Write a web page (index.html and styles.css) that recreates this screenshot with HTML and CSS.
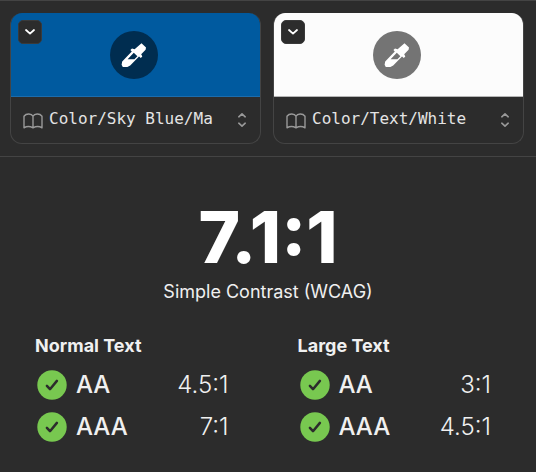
FILE: index.html
```html
<!DOCTYPE html>
<html lang="en">
<head>
<meta charset="utf-8">
<meta name="viewport" content="width=device-width, initial-scale=1">
<title>Contrast</title>
<link rel="stylesheet" href="styles.css">
</head>
<body>
<svg class="sprite" aria-hidden="true">
  <symbol id="dropper" viewBox="0 0 26 26">
    <path fill="currentColor" fill-rule="evenodd" d="M20.5 1.2 25 5.4 24.6 7.8 20.2 12.2 21.3 14.6 19.8 16 18 14.6 9.2 23.4 6.4 25 1.8 25 .6 22.8 1.2 19.4 10.8 9.6 9.4 8 11 6.4 13.6 7.2ZM12.8 10.8 6.6 17.2 13.4 17.2 16.4 14.2Z"/>
  </symbol>
  <symbol id="chevron" viewBox="0 0 12 8">
    <path class="line" stroke-width="1.8" d="M2 2 6 5.6 10 2"/>
  </symbol>
  <symbol id="book" viewBox="0 0 20 16">
    <path class="line" stroke-width="1.4" d="M10 3.2C8.6.5 3.3.2 1 3.2V14.8C3.5 13.2 7.2 13.2 10 14.8 12.8 13.2 16.5 13.2 19 14.8V3.2C16.7.2 11.4.5 10 3.2V14.8"/>
  </symbol>
  <symbol id="updown" viewBox="0 0 10 16">
    <path class="line" stroke-width="1.6" d="M1.8 4.8 5 1.8 8.2 4.8M1.8 11.2 5 14.2 8.2 11.2"/>
  </symbol>
  <symbol id="pass" viewBox="0 0 30 30">
    <circle cx="15" cy="15" r="14.7" fill="#78c850"/>
    <path d="M9.9 15.8 13 19.2 19.9 10.9" fill="none" stroke="#2c2c2c" stroke-width="2.5" stroke-linecap="round" stroke-linejoin="round"/>
  </symbol>
</svg>

<section class="colors">
  <div class="card">
    <div class="swatch swatch-blue">
      <button class="menu" type="button" aria-label="Foreground options"><svg class="chevron"><use href="#chevron"/></svg></button>
      <button class="pick" type="button" aria-label="Pick foreground"><svg class="dropper"><use href="#dropper"/></svg></button>
    </div>
    <label class="field">
      <svg class="book" aria-label="Foreground color" role="img"><use href="#book"/></svg>
      <select><option>Color/Sky Blue/Ma</option></select>
      <svg class="updown"><use href="#updown"/></svg>
    </label>
  </div>
  <div class="card">
    <div class="swatch swatch-white">
      <button class="menu" type="button" aria-label="Background options"><svg class="chevron"><use href="#chevron"/></svg></button>
      <button class="pick" type="button" aria-label="Pick background"><svg class="dropper"><use href="#dropper"/></svg></button>
    </div>
    <label class="field">
      <svg class="book" aria-label="Background color" role="img"><use href="#book"/></svg>
      <select><option>Color/Text/White</option></select>
      <svg class="updown"><use href="#updown"/></svg>
    </label>
  </div>
</section>

<main class="result">
  <h1>7.1:1</h1>
  <p class="method">Simple Contrast (WCAG)</p>
  <div class="levels">
    <table>
      <caption>Normal Text</caption>
      <tr><td class="mark"><svg class="pass" role="img" aria-label="Pass"><use href="#pass"/></svg></td><th scope="row">AA</th><td class="ratio">4.5:1</td></tr>
      <tr><td class="mark"><svg class="pass" role="img" aria-label="Pass"><use href="#pass"/></svg></td><th scope="row">AAA</th><td class="ratio">7:1</td></tr>
    </table>
    <table>
      <caption>Large Text</caption>
      <tr><td class="mark"><svg class="pass" role="img" aria-label="Pass"><use href="#pass"/></svg></td><th scope="row">AA</th><td class="ratio">3:1</td></tr>
      <tr><td class="mark"><svg class="pass" role="img" aria-label="Pass"><use href="#pass"/></svg></td><th scope="row">AAA</th><td class="ratio">4.5:1</td></tr>
    </table>
  </div>
</main>
</body>
</html>
```

FILE: styles.css
```css
* {
  box-sizing: border-box;
}

body {
  margin: 0;
  background: #2c2c2c;
  color: #f0f0f0;
  font-family: Inter, "Liberation Sans", sans-serif;
}

button {
  padding: 0;
  border: 0;
  color: #fff;
}

svg {
  display: block;
  flex: none;
}

.sprite {
  position: absolute;
  width: 0;
  height: 0;
}

.line {
  fill: none;
  stroke: currentColor;
  stroke-linecap: round;
  stroke-linejoin: round;
}

.colors {
  display: grid;
  grid-template-columns: 1fr 1fr;
  gap: 12px;
  padding: 12px 12px 12px 10px;
  border-top: 1px solid #444;
  border-bottom: 1px solid #444;
}

.card {
  overflow: hidden;
  border: 1px solid #444;
  border-top: 0;
  border-radius: 12px;
}

.swatch {
  position: relative;
  display: flex;
  align-items: center;
  justify-content: center;
  height: 84px;
  margin: 0 -1px;
  padding-right: 3px;
  border-bottom: 1px solid;
}

.swatch-blue {
  background: #005a9f;
  border-color: #1c6cac;
}

.swatch-white {
  background: #fcfcfc;
  border-color: #b5b5b5;
}

.menu {
  position: absolute;
  top: 7px;
  left: 8px;
  display: grid;
  place-items: center;
  width: 24px;
  height: 24px;
  border: 1px solid #3a3a3a;
  border-radius: 5px;
  background: #2c2c2c;
}

.chevron {
  width: 12px;
  height: 8px;
}

.pick {
  display: grid;
  place-items: center;
  width: 48px;
  height: 48px;
  border-radius: 50%;
  background: #002d50;
}

.swatch-white .pick {
  background: #747474;
}

.dropper {
  width: 26px;
  height: 26px;
}

.field {
  display: flex;
  align-items: center;
  height: 46px;
  padding: 0 13px 0 12px;
  color: #999;
}

.book {
  width: 20px;
  height: 16px;
  margin: 1px 6px 0 0;
}

.field select {
  flex: 1;
  min-width: 0;
  height: 24px;
  margin: 0 0 4px;
  padding: 0;
  border: 0;
  appearance: none;
  background: none;
  color: #e4e4e4;
  font: 16px "DejaVu Sans Mono", monospace;
}

.updown {
  width: 10px;
  height: 16px;
}

.result {
  padding: 44px 0 24px;
}

h1 {
  margin: 0;
  color: #fff;
  font-size: 71px;
  font-weight: 800;
  line-height: 72px;
  text-align: center;
}

.method {
  margin: 7px 0 30px;
  font-size: 18px;
  line-height: 24px;
  text-align: center;
}

.levels {
  display: grid;
  grid-template-columns: 1fr 1fr;
  gap: 69px;
  padding: 0 45px 0 35px;
}

table {
  width: 100%;
  border-collapse: collapse;
  font-size: 24px;
  line-height: 42px;
}

caption {
  padding-bottom: 6px;
  font-size: 18px;
  font-weight: 700;
  line-height: 24px;
  text-align: left;
}

th,
td {
  padding: 0;
}

th {
  font-weight: 500;
  text-align: left;
}

.mark {
  width: 41px;
  padding-left: 2px;
  vertical-align: middle;
}

.pass {
  width: 30px;
  height: 30px;
}

.ratio {
  font-weight: 300;
  text-align: right;
}
```
